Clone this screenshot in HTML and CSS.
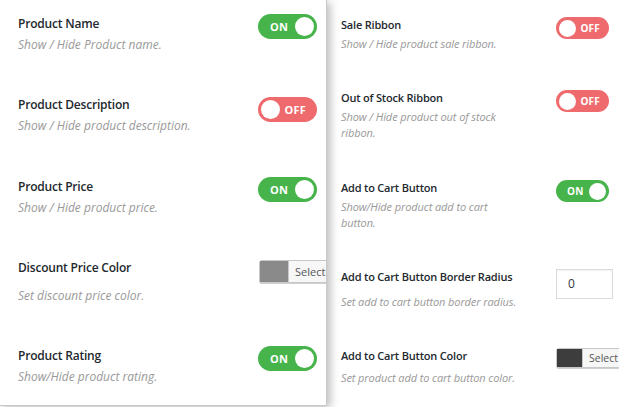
FILE: index.html
```html
<!DOCTYPE html>
<html lang="en">
<head>
<meta charset="utf-8">
<title>Product display settings</title>
<link rel="stylesheet" href="styles.css">
</head>
<body>
<div class="page">
  <section class="panel panel-left">
    <div class="row r-81">
      <div class="head">
        <div class="title">Product Name</div>
        <span class="toggle on"><span class="label">ON</span><span class="knob"></span></span>
      </div>
      <div class="desc">Show / Hide Product name.</div>
    </div>
    <div class="row r-82">
      <div class="head">
        <div class="title">Product Description</div>
        <span class="toggle off shift"><span class="knob"></span><span class="label">OFF</span></span>
      </div>
      <div class="desc">Show / Hide product description.</div>
    </div>
    <div class="row r-81">
      <div class="head">
        <div class="title">Product Price</div>
        <span class="toggle on"><span class="label">ON</span><span class="knob"></span></span>
      </div>
      <div class="desc">Show / Hide product price.</div>
    </div>
    <div class="row r-88">
      <div class="head">
        <div class="title">Discount Price Color</div>
        <span class="picker shift"><span class="swatch grey"></span><span class="pick-btn">Select Color</span></span>
      </div>
      <div class="desc d-far">Set discount price color.</div>
    </div>
    <div class="row">
      <div class="head">
        <div class="title">Product Rating</div>
        <span class="toggle on"><span class="label">ON</span><span class="knob"></span></span>
      </div>
      <div class="desc">Show/Hide product rating.</div>
    </div>
  </section>

  <section class="panel panel-right">
    <div class="row r-73">
      <div class="head">
        <div class="title">Sale Ribbon</div>
        <span class="toggle sm off shift"><span class="knob"></span><span class="label">OFF</span></span>
      </div>
      <div class="desc">Show / Hide product sale ribbon.</div>
    </div>
    <div class="row r-90">
      <div class="head">
        <div class="title">Out of Stock Ribbon</div>
        <span class="toggle sm off shift"><span class="knob"></span><span class="label">OFF</span></span>
      </div>
      <div class="desc">Show / Hide product out of stock ribbon.</div>
    </div>
    <div class="row r-89">
      <div class="head">
        <div class="title">Add to Cart Button</div>
        <span class="toggle sm on shift"><span class="label">ON</span><span class="knob"></span></span>
      </div>
      <div class="desc">Show/Hide product add to cart button.</div>
    </div>
    <div class="row r-79">
      <div class="head">
        <div class="title">Add to Cart Button Border Radius</div>
        <span class="number shift">0</span>
      </div>
      <div class="desc d-far">Set add to cart button border radius.</div>
    </div>
    <div class="row">
      <div class="head">
        <div class="title">Add to Cart Button Color</div>
        <span class="picker sm shift"><span class="swatch dark"></span><span class="pick-btn">Select Color</span></span>
      </div>
      <div class="desc d-mid">Set product add to cart button color.</div>
    </div>
  </section>
</div>
</body>
</html>
```

FILE: styles.css
```css
* { box-sizing: border-box; }

html, body {
  margin: 0;
  padding: 0;
  background: #ffffff;
}

body {
  font-family: "Open Sans", "Noto Sans", Arial, sans-serif;
  color: #23282d;
  width: 619px;
  height: 407px;
  overflow: hidden;
}

.page {
  display: flex;
  height: 407px;
}

.panel {
  overflow: hidden;
  background: #fff;
}

.panel-left {
  width: 327px;
  height: 406px;
  padding: 14px 9px 0 18px;
  border-right: 1px solid #c9c9c9;
  border-bottom: 1px solid #c9c9c9;
  position: relative;
  z-index: 1;
  box-shadow: 3px 2px 9px rgba(0, 0, 0, 0.28);
}

.panel-right {
  flex: 1;
  height: 407px;
  padding: 15px 10px 0 14px;
}

.row { display: flex; flex-direction: column; }
.r-73 { height: 73px; }
.r-79 { height: 79px; }
.r-81 { height: 81px; }
.r-82 { height: 82px; }
.r-88 { height: 88px; }
.r-89 { height: 89px; }
.r-90 { height: 90px; }

.head {
  display: flex;
  justify-content: space-between;
  align-items: flex-start;
  height: 20px;
}

.title {
  font-size: 12px;
  font-weight: 600;
  line-height: 20px;
  color: #23282d;
  white-space: nowrap;
  letter-spacing: -0.2px;
}

.panel-right .title { font-size: 11px; }

.desc {
  margin-top: 2px;
  font-size: 12px;
  font-style: italic;
  line-height: 18px;
  color: #999;
}

.panel-right .desc {
  margin-top: 1px;
  font-size: 11px;
  line-height: 16px;
  width: 178px;
  letter-spacing: -0.1px;
}

.panel-left .desc.d-far { margin-top: 9px; }
.panel-right .desc.d-far { margin-top: 7px; }
.panel-right .desc.d-mid { margin-top: 4px; }

.shift { margin-top: 2px; }

/* toggles */
.toggle {
  flex: none;
  width: 59px;
  height: 25px;
  border-radius: 13px;
  display: flex;
  align-items: center;
  justify-content: space-between;
  padding: 0 3px 0 12px;
}
.toggle.off { padding: 0 11px 0 3px; }
.toggle.on { background: #46b44a; }
.toggle.off { background: #ef6a6d; }

.knob {
  width: 19px;
  height: 19px;
  border-radius: 50%;
  background: #fff;
}

.label {
  color: #fff;
  font-size: 11px;
  font-weight: 700;
  letter-spacing: 0.2px;
  line-height: 1;
}

.toggle.sm {
  width: 53px;
  height: 22px;
  border-radius: 11px;
  padding: 0 3px 0 11px;
}
.toggle.sm.off { padding: 0 9px 0 3px; }
.toggle.sm .knob { width: 17px; height: 17px; }
.toggle.sm .label { font-size: 10px; }

/* colour picker */
.picker {
  flex: none;
  width: 100px;
  height: 23px;
  margin-right: -42px;
  display: flex;
  border: 1px solid #c8c8c8;
  border-radius: 3px;
  background: #f7f7f7;
  box-shadow: 0 1px 0 #cfcfcf;
}
.swatch {
  width: 29px;
  height: 100%;
  border-right: 1px solid #c8c8c8;
}
.swatch.grey { background: #8a8a8a; }
.swatch.dark { background: #3d3d3d; }
.pick-btn {
  padding-left: 6px;
  font-size: 11px;
  line-height: 21px;
  color: #555;
  white-space: nowrap;
}

.picker.sm {
  height: 20px;
  margin-right: -47px;
}
.picker.sm .swatch { width: 26px; }
.picker.sm .pick-btn { line-height: 18px; font-size: 10.5px; }

/* number input */
.number {
  flex: none;
  width: 57px;
  height: 30px;
  margin-right: -4px;
  border: 1px solid #dcdcdc;
  padding-left: 11px;
  font-size: 12px;
  line-height: 28px;
  color: #32373c;
  box-shadow: inset 0 1px 2px rgba(0, 0, 0, 0.05);
}
```
